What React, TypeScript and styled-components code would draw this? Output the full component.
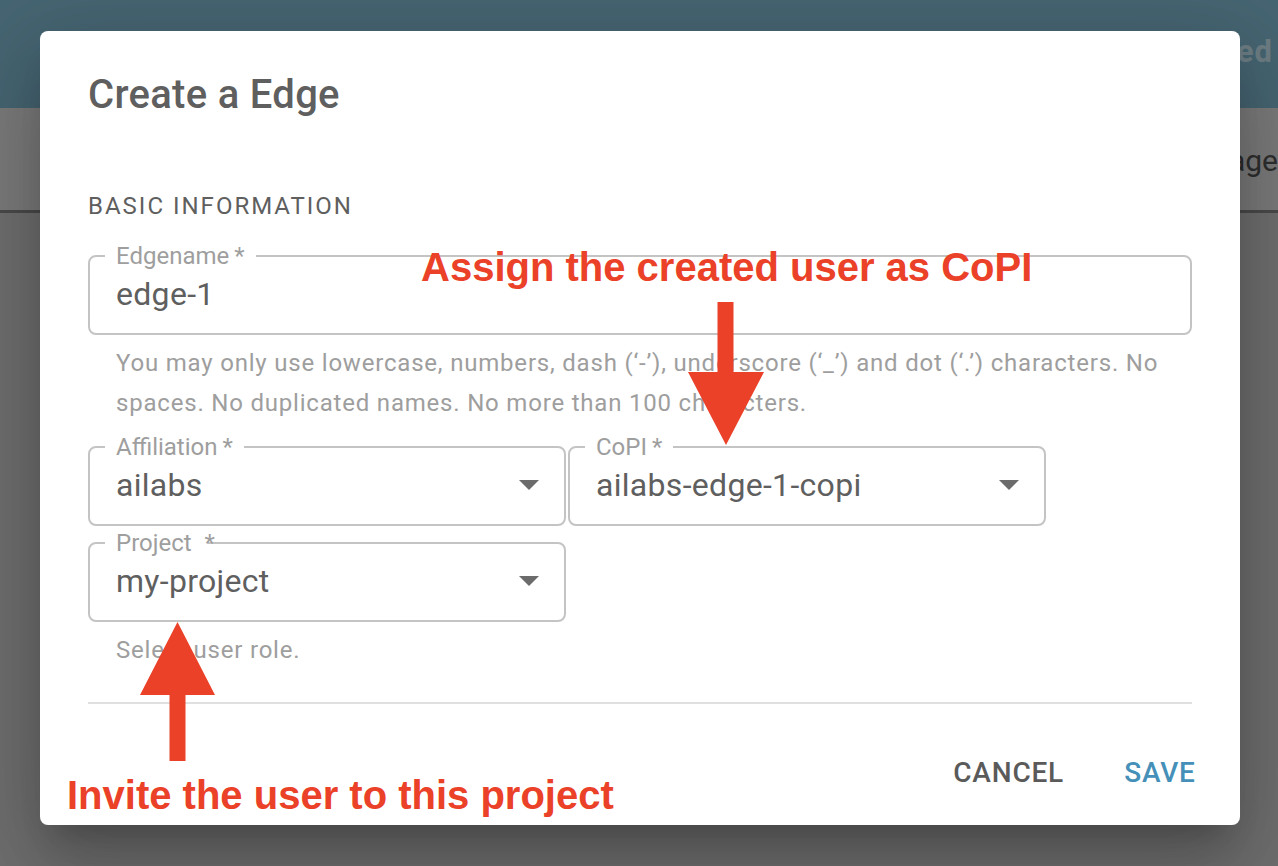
import React from 'react';
import styled, { createGlobalStyle } from 'styled-components';

const GlobalStyle = createGlobalStyle`
  html, body { margin: 0; padding: 0; height: 100%; overflow: hidden; }
  body { font-family: Roboto, "Noto Sans", sans-serif; background: #cacaca; }
  #root { height: 100%; }
`;

const Page = styled.div`
  position: relative;
  height: 866px;
  display: flex;
  flex-direction: column;
  overflow: hidden;
`;

const Header = styled.header`
  flex: none;
  height: 108px;
  box-sizing: border-box;
  display: flex;
  align-items: center;
  justify-content: flex-end;
  padding: 0 5px 6px 0;
  background: #80b9cf;
`;

const HeaderStatus = styled.span`
  font: 700 31px/1 Roboto, sans-serif;
  letter-spacing: 1px;
  color: #c6e4ef;
`;

const Toolbar = styled.nav`
  flex: none;
  height: 105px;
  box-sizing: border-box;
  display: flex;
  align-items: center;
  justify-content: flex-end;
  padding-top: 4px;
  background: #e0e0e0;
  border-bottom: 3px solid #888;
`;

const NavItem = styled.span`
  font: 400 30px/1 Roboto, sans-serif;
  color: #555;
  white-space: nowrap;
`;

const Body = styled.main`
  flex: 1;
  background: #cacaca;
`;

const Backdrop = styled.div`
  position: absolute;
  inset: 0;
  background: rgba(0, 0, 0, 0.45);
  display: flex;
  align-items: flex-start;
  justify-content: flex-start;
  padding: 31px 0 0 40px;
`;

const Dialog = styled.section`
  width: 1200px;
  background: #fff;
  border-radius: 8px;
  display: flex;
  flex-direction: column;
  box-shadow: 0 22px 30px -14px rgba(0, 0, 0, 0.2),
    0 48px 76px 6px rgba(0, 0, 0, 0.14),
    0 18px 92px 16px rgba(0, 0, 0, 0.12);
`;

const Title = styled.h2`
  margin: 0;
  padding: 32px 48px;
  font: 500 40px/64px Roboto, sans-serif;
  letter-spacing: 0.3px;
  color: #5f5f5f;
`;

const Content = styled.div`
  padding: 15px 48px 16px;
  display: flex;
  flex-direction: column;
  align-items: flex-start;
`;

const Overline = styled.div`
  font: 400 24px/64px Roboto, sans-serif;
  letter-spacing: 2px;
  text-transform: uppercase;
  color: #5f5f5f;
  margin-bottom: 6px;
`;

const Field = styled.fieldset<{ $width?: number }>`
  margin: 0;
  min-width: 0;
  box-sizing: border-box;
  width: ${(p) => (p.$width ? `${p.$width}px` : '100%')};
  padding: 3px 25px 16px 26px;
  border: 2px solid #c4c4c4;
  border-radius: 8px;
`;

const Legend = styled.legend<{ $padRight?: number }>`
  margin-left: -11px;
  padding: 0 ${(p) => p.$padRight ?? 11}px 0 11px;
  font: 400 24px/24px Roboto, sans-serif;
  color: #9e9e9e;
  white-space: nowrap;
`;

const Star = styled.span`
  display: inline-block;
  width: 0;
  margin-left: 13px;
  white-space: nowrap;
`;

const FieldInner = styled.div`
  display: flex;
  align-items: center;
  height: 46px;
`;

const Value = styled.span`
  flex: 1;
  font: 400 32px/46px Roboto, sans-serif;
  letter-spacing: 0.3px;
  color: #5f5f5f;
  white-space: nowrap;
`;

const Helper = styled.p`
  margin: 8px 28px 0;
  font: 400 24px/40px Roboto, sans-serif;
  letter-spacing: 0.8px;
  color: #9e9e9e;
`;

const FieldRow = styled.div`
  display: flex;
  gap: 2px;
  margin-top: 12px;
`;

const Spaced = styled.div<{ $top: number }>`
  margin-top: ${(p) => p.$top}px;
`;

const Divider = styled.hr`
  align-self: stretch;
  margin: 32px 0 0;
  border: none;
  height: 2px;
  background: #e0e0e0;
`;

const Actions = styled.div`
  display: flex;
  justify-content: flex-end;
  gap: 16px;
  padding: 16px;
`;

const TextButton = styled.button<{ $primary?: boolean }>`
  min-width: 128px;
  padding: 12px 16px;
  border: none;
  background: none;
  font: 500 28px/49px Roboto, sans-serif;
  letter-spacing: 0.8px;
  text-transform: uppercase;
  color: ${(p) => (p.$primary ? '#4590b9' : '#5a5a5a')};
  cursor: pointer;
`;

const Annotations = styled.div`
  position: absolute;
  inset: 0;
  pointer-events: none;
`;

const Note = styled.div<{ $x: number; $y: number }>`
  position: absolute;
  left: ${(p) => p.$x}px;
  top: ${(p) => p.$y}px;
  font: 700 40px/40px "Liberation Sans", Arial, sans-serif;
  color: #ea4128;
  white-space: nowrap;
`;

const ArrowSvg = styled.svg<{ $x: number; $y: number }>`
  position: absolute;
  left: ${(p) => p.$x}px;
  top: ${(p) => p.$y}px;
  fill: #ea4128;
`;

const DropArrow = () => (
  <svg width="20" height="10" viewBox="0 0 20 10" fill="#6b6b6b">
    <polygon points="0,0 20,0 10,10" />
  </svg>
);

const SelectField = ({ label, value, width }: { label: React.ReactNode; value: string; width: number }) => (
  <Field $width={width}>
    {label}
    <FieldInner>
      <Value>{value}</Value>
      <DropArrow />
    </FieldInner>
  </Field>
);

export default function App() {
  return (
    <>
      <GlobalStyle />
      <Page>
        <Header>
          <HeaderStatus>Connected</HeaderStatus>
        </Header>
        <Toolbar>
          <NavItem>Usage</NavItem>
        </Toolbar>
        <Body />
        <Backdrop>
          <Dialog>
            <Title>Create a Edge</Title>
            <Content>
              <Overline>Basic Information</Overline>
              <Field>
                <Legend>Edgename{'\u2009'}*</Legend>
                <FieldInner>
                  <Value>edge-1</Value>
                </FieldInner>
              </Field>
              <Helper>
                You may only use lowercase, numbers, dash (‘-’), underscore (‘_’) and dot (‘.’) characters. No
                spaces. No duplicated names. No more than 100 characters.
              </Helper>
              <FieldRow>
                <SelectField width={478} label={<Legend>Affiliation{'\u2009'}*</Legend>} value="ailabs" />
                <SelectField width={478} label={<Legend>CoPI{'\u2009'}*</Legend>} value="ailabs-edge-1-copi" />
              </FieldRow>
              <Spaced $top={5}>
                <SelectField
                  width={478}
                  label={
                    <Legend $padRight={3}>
                      Project
                      <Star>*</Star>
                    </Legend>
                  }
                  value="my-project"
                />
              </Spaced>
              <Helper>Select user role.</Helper>
              <Divider />
            </Content>
            <Actions>
              <TextButton>Cancel</TextButton>
              <TextButton $primary>Save</TextButton>
            </Actions>
          </Dialog>
        </Backdrop>
        <Annotations>
          <Note $x={421} $y={247}>Assign the created user as CoPI</Note>
          <ArrowSvg $x={688} $y={302} width="76" height="143" viewBox="0 0 76 143">
            <polygon points="29.5,0 45.5,0 45.5,70 76,70 38,143 0,70 29.5,70" />
          </ArrowSvg>
          <ArrowSvg $x={140} $y={622} width="75" height="139" viewBox="0 0 75 139">
            <polygon points="37.5,0 75,73 45.5,73 45.5,139 29.5,139 29.5,73 0,73" />
          </ArrowSvg>
          <Note $x={67} $y={775}>Invite the user to this project</Note>
        </Annotations>
      </Page>
    </>
  );
}
